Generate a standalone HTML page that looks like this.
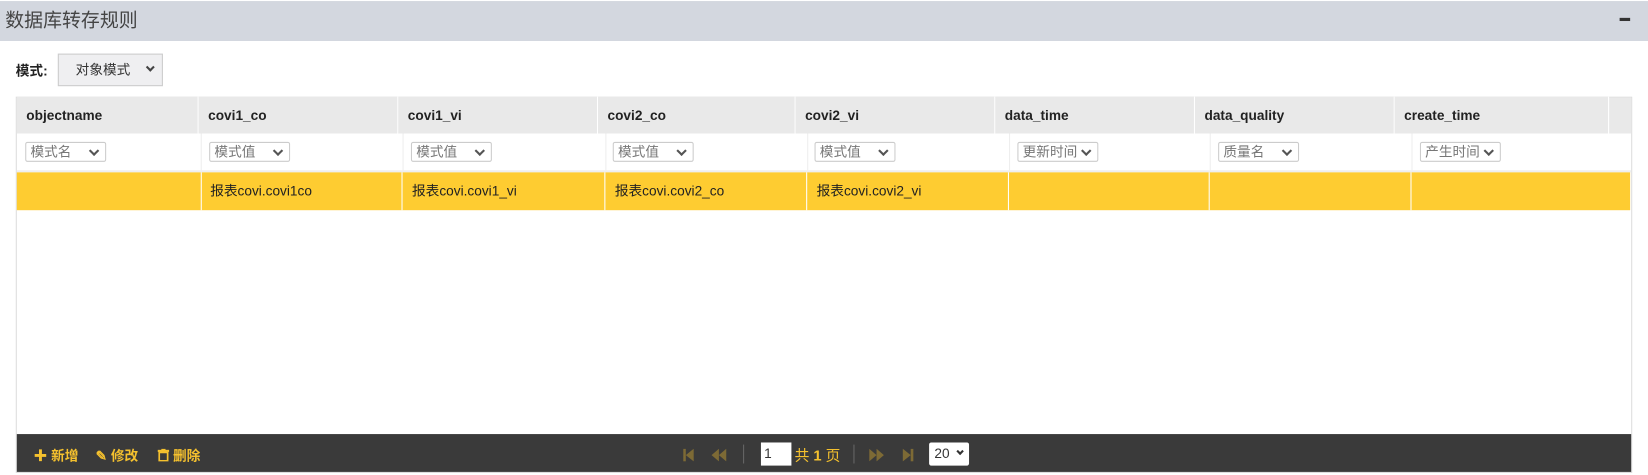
<!DOCTYPE html>
<html><head><meta charset="utf-8"><style>
*{margin:0;padding:0;box-sizing:border-box}
body{width:1648px;height:475px;background:#fff;font-family:"Liberation Sans","Noto Sans CJK SC",sans-serif;overflow:hidden;font-size:13px;color:#333}
#w{position:absolute;left:0;top:0;width:1568px;height:452px;transform:scale(1.05102);transform-origin:0 0}
.a{position:absolute}
.sel{position:absolute;border:1px solid #ccc;background:#fff;color:#777;font-size:13px;height:19px;line-height:17px;padding-left:4px;border-radius:2px}
.sel:after{content:"";position:absolute;right:7px;top:4px;width:5px;height:5px;border-right:2px solid #555;border-bottom:2px solid #555;transform:rotate(45deg)}
.th{position:absolute;top:92px;height:35px;line-height:35px;font-weight:bold;font-size:13px;color:#222;padding-left:9px;border-right:1px solid #fff;background:#e9e9e9}
.td{position:absolute;top:164px;height:36px;line-height:36px;font-size:13px;color:#222;padding-left:9px;border-right:1px solid #fff}
.vl{position:absolute;top:127px;height:37px;width:1px;background:#eee}
.y{color:#f5c12e;font-weight:bold}
</style></head><body><div id="w">
<div class="a" style="left:0;top:1px;width:1568px;height:38px;background:#d3d7df"></div>
<div class="a" style="left:5px;top:6px;font-size:18px;color:#444;line-height:26px">数据库转存规则</div>
<div class="a" style="left:1628px;top:17px;width:10px;height:3px;background:#333;left:1541px"></div>
<div class="a" style="left:15px;top:57px;font-weight:bold;font-size:13px;color:#222">模式:</div>
<div class="a" style="left:55px;top:51px;width:100px;height:31px;background:#efeff1;border:1px solid #ccc;font-size:13px;color:#333;line-height:29px;padding-left:16px">对象模式
<span style="position:absolute;right:8px;top:9px;width:6px;height:6px;border-right:2px solid #444;border-bottom:2px solid #444;transform:rotate(45deg)"></span></div>
<div class="a" style="left:15px;top:92px;width:1538px;height:358px;border:1px solid #ddd"></div>
<div class="a" style="left:16px;top:93px;width:1536px;height:34px;background:#e9e9e9"></div>
<div class="th" style="left:16px;width:173px">objectname</div>
<div class="th" style="left:189px;width:190px">covi1_co</div>
<div class="th" style="left:379px;width:190px">covi1_vi</div>
<div class="th" style="left:569px;width:188px">covi2_co</div>
<div class="th" style="left:757px;width:190px">covi2_vi</div>
<div class="th" style="left:947px;width:190px">data_time</div>
<div class="th" style="left:1137px;width:190px">data_quality</div>
<div class="th" style="left:1327px;width:204px">create_time</div>
<div class="vl" style="left:191px"></div><div class="vl" style="left:383px"></div><div class="vl" style="left:576px"></div><div class="vl" style="left:768px"></div><div class="vl" style="left:960px"></div><div class="vl" style="left:1151px"></div><div class="vl" style="left:1343px"></div>
<div class="a" style="left:16px;top:162px;width:1536px;height:2px;background:#eee"></div>
<div class="sel" style="left:24px;top:135px;width:77px">模式名</div>
<div class="sel" style="left:199px;top:135px;width:77px">模式值</div>
<div class="sel" style="left:391px;top:135px;width:77px">模式值</div>
<div class="sel" style="left:583px;top:135px;width:77px">模式值</div>
<div class="sel" style="left:775px;top:135px;width:77px">模式值</div>
<div class="sel" style="left:968px;top:135px;width:77px">更新时间</div>
<div class="sel" style="left:1159px;top:135px;width:77px">质量名</div>
<div class="sel" style="left:1351px;top:135px;width:77px">产生时间</div>
<div class="a" style="left:16px;top:164px;width:1535px;height:36px;background:#fecc31"></div>
<div class="td" style="left:16px;width:176px"></div>
<div class="td" style="left:191px;width:192px">报表covi.covi1co</div>
<div class="td" style="left:383px;width:193px">报表covi.covi1_vi</div>
<div class="td" style="left:576px;width:192px">报表covi.covi2_co</div>
<div class="td" style="left:768px;width:192px">报表covi.covi2_vi</div>
<div class="td" style="left:960px;width:191px"></div>
<div class="td" style="left:1151px;width:192px"></div>
<div class="a" style="left:16px;top:413px;width:1536px;height:36px;background:#3a3a3a"></div>
<div class="a y" style="left:32px;top:423px;font-size:13px">✚ 新增</div>
<div class="a y" style="left:91px;top:423px;font-size:13px">✎ 修改</div>
<div class="a y" style="left:150px;top:423px;font-size:13px">
<svg width="11" height="12" viewBox="0 0 11 12" style="vertical-align:-1px"><rect x="0" y="1" width="11" height="2" fill="#f5c12e"/><rect x="3.5" y="0" width="4" height="1.5" fill="#f5c12e"/><path d="M1.5 3.5h8v8h-8z" fill="none" stroke="#f5c12e" stroke-width="1.6"/></svg> 删除</div>
<svg class="a" style="left:650px;top:427px" width="60" height="12" viewBox="0 0 60 12">
<rect x="0" y="0" width="2.5" height="12" fill="#7d6a35"/><path d="M10 0L2.5 6L10 12z" fill="#7d6a35"/>
<path d="M34 0L27 6L34 12zM41 0L34 6L41 12z" fill="#7d6a35"/></svg>
<div class="a" style="left:707px;top:423px;width:1px;height:18px;background:#666"></div>
<div class="a" style="left:724px;top:421px;width:29px;height:22px;background:#fff;font-size:13px;line-height:22px;padding-left:3px;color:#333">1</div>
<div class="a y" style="left:756px;top:423px;font-weight:normal;font-size:14px">共 <b>1</b> 页</div>
<div class="a" style="left:812px;top:423px;width:1px;height:18px;background:#666"></div>
<svg class="a" style="left:827px;top:427px" width="50" height="12" viewBox="0 0 50 12">
<path d="M0 0L7 6L0 12zM7 0L14 6L7 12z" fill="#7d6a35"/>
<path d="M32 0L39.5 6L32 12z" fill="#7d6a35"/><rect x="39.5" y="0" width="2.5" height="12" fill="#7d6a35"/></svg>
<div class="a" style="left:884px;top:421px;width:38px;height:22px;background:#fff;border-radius:2px;font-size:13px;line-height:22px;padding-left:5px;color:#333">20
<span style="position:absolute;right:6px;top:6px;width:5px;height:5px;border-right:2px solid #333;border-bottom:2px solid #333;transform:rotate(45deg)"></span></div>
</div></body></html>
